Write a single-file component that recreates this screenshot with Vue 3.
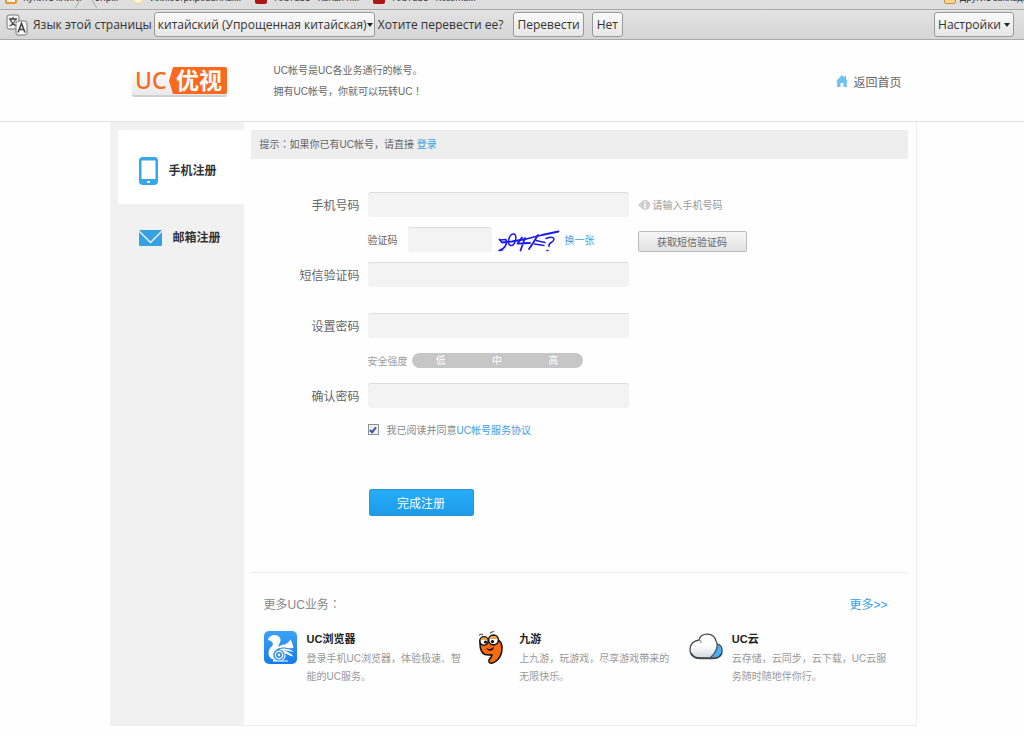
<script setup>
import { ref } from 'vue'

const bookmarks = [
  { text: 'Купите книги', kind: 'shop' },
  { text: 'эпр...', kind: 'none' },
  { text: 'Иллюстрированны...', kind: 'sun' },
  { text: 'YouTube - Канал п...', kind: 'tube' },
  { text: 'YouTube - Rossma...', kind: 'tube' },
]
const services = [
  { id: 'browser', title: 'UC浏览器', text: '登录手机UC浏览器，体验极速、智能的UC服务。' },
  { id: 'game', title: '九游', text: '上九游，玩游戏，尽享游戏带来的无限快乐。' },
  { id: 'cloud', title: 'UC云', text: '云存储，云同步，云下载，UC云服务随时随地伴你行。' },
]
const phone = ref('')
const captcha = ref('')
const sms = ref('')
const password = ref('')
const confirm = ref('')
const agreed = ref(true)
</script>

<template>
  <div class="page">
    <div class="bookmarks">
      <span v-for="b in bookmarks" :key="b.text" class="bookmark" :class="b.kind">
        <i v-if="b.kind !== 'none'" class="favicon"></i><span>{{ b.text }}</span>
      </span>
      <svg class="tab-edge" viewBox="0 0 26 9" aria-hidden="true">
        <path d="M0 8.500 L5 0 M17 0 L22 8.500" fill="none" stroke="#aaa" />
      </svg>
      <span class="bookmark folder"><i class="favicon"></i><span>Другие закладки</span></span>
    </div>

    <div class="translate">
      <svg class="tr-icon" viewBox="0 0 22 22" aria-hidden="true">
        <rect x="1" y="1" width="12" height="14" rx="2" fill="#f5f5f5" stroke="#777" />
        <path d="M3 5h8M7 3v2M9.500 5C9 8 6 11 3.500 12M4.500 5.500C5.500 9 8 11 10.500 12" fill="none" stroke="#444" stroke-width="1.300" />
        <rect x="10" y="7" width="11" height="14" rx="2" fill="#fafafa" stroke="#777" />
        <path d="M12 18.500 15.500 9.500 19 18.500M13.300 15.500h4.400" fill="none" stroke="#444" stroke-width="1.600" />
      </svg>
      <label for="lang">Язык этой страницы</label>
      <span class="select-wrap">
        <select id="lang"><option>китайский (Упрощенная китайская)</option></select>
        <i class="caret"></i>
      </span>
      <span class="ask">Хотите перевести ее?</span>
      <button type="button">Перевести</button>
      <button type="button" class="no">Нет</button>
      <button type="button" class="settings">Настройки<i class="caret"></i></button>
    </div>

    <header class="header">
      <div class="wrap header-in">
        <svg class="logo" viewBox="0 0 100 34" role="img" aria-label="UC优视">
          <defs>
            <linearGradient id="lg" x1="0" y1="0" x2="0" y2="1">
              <stop offset="0" stop-color="#fff" /><stop offset="1" stop-color="#e9e9e9" />
            </linearGradient>
          </defs>
          <rect x="2" y="5" width="95" height="28" rx="2" fill="#d0d0d0" />
          <rect x="2" y="3" width="95" height="28" rx="2" fill="url(#lg)" />
          <path d="M43 3H95a2 2 0 0 1 2 2V28a2 2 0 0 1-2 2H43L39 17Z" fill="#fb6a1c" />
          <text x="5" y="25" class="logo-uc">UC</text>
          <text x="46" y="25" class="logo-cn">优视</text>
        </svg>
        <p class="intro">UC帐号是UC各业务通行的帐号。<br />拥有UC帐号，你就可以玩转UC<span class="mid">！</span></p>
        <a href="#" class="home">
          <svg viewBox="0 0 12 12" aria-hidden="true"><path d="M6 0 8.500 2.500V1H10V4L12 6.200H10.800V12H7.500V8H4.500V12H1.200V6.200H0Z" fill="#6fc1f2" /></svg>
          返回首页
        </a>
      </div>
    </header>

    <div class="wrap main">
      <nav class="side">
        <a href="#" class="tab active">
          <svg class="ic-phone" viewBox="0 0 19 28" aria-hidden="true">
            <rect width="19" height="28" rx="4" fill="#35a6e8" />
            <rect x="2.500" y="3.500" width="14" height="18.500" fill="#fff" />
            <rect x="8" y="24" width="3" height="2" rx="1" fill="#fff" />
          </svg>
          <span>手机注册</span>
        </a>
        <a href="#" class="tab">
          <svg class="ic-mail" viewBox="0 0 23 16" aria-hidden="true">
            <rect width="23" height="16" rx="1" fill="#35a3e2" />
            <path d="M0 1 11.500 12.500 23 1" fill="none" stroke="#f1f1f1" stroke-width="1.400" />
          </svg>
          <span>邮箱注册</span>
        </a>
      </nav>

      <main class="content">
        <p class="tip">提示<span class="mid">：</span>如果你已有UC帐号，请直接 <a href="#">登录</a></p>

        <form class="form" @submit.prevent>
          <div class="row">
            <label class="name" for="phone">手机号码</label>
            <input id="phone" v-model="phone" class="box" type="tel" />
            <span class="hint">
              <svg viewBox="0 0 12 12" aria-hidden="true"><path d="M0 6 3 3.200A5 5 0 1 1 3 8.800Z" fill="#cfcfcf" /><path d="M7 2.500v1.500M7 5v4.500" stroke="#fff" stroke-width="1.600" /></svg>
              请输入手机号码
            </span>
          </div>
          <div class="row sub">
            <label class="small" for="captcha">验证码</label>
            <input id="captcha" v-model="captcha" class="box short" type="text" />
            <svg class="captcha" viewBox="0 0 62 22" role="img" aria-label="验证码图片">
              <g fill="none" stroke="#1a1af0" stroke-width="1.500" stroke-linecap="round" stroke-linejoin="round">
                <path d="M60.500 1.500 44 5 28 9 14 11.500 4 12.500 1.500 9.500" stroke-width="1.800" />
                <path d="M2 10 8 9.500C10 13 7 19 1 20.500L4.500 20" />
                <path d="M16 4C11 3.500 8.500 14 12.500 15.500C17 16.500 20 5 16 4Z" />
                <path d="M24 7.500 19.500 13.500 32 13M27 8 22.500 20.500M40 5C37 10 34 15 31 19" stroke-width="1.800" />
                <path d="M38 10.500 47 12.500M36.500 14 46 15.500M48 8.500C56 5.500 58 9 54 12C50 14 51 16 51 16.500M49 20.500h1" />
              </g>
            </svg>
            <a href="#" class="swap">换一张</a>
            <button type="button" class="sms-btn">获取短信验证码</button>
          </div>
          <div class="row">
            <label class="name" for="sms">短信验证码</label>
            <input id="sms" v-model="sms" class="box" type="text" />
          </div>
          <div class="row apart">
            <label class="name" for="pw">设置密码</label>
            <input id="pw" v-model="password" class="box" type="password" />
          </div>
          <div class="row sub strength">
            <span>安全强度</span>
            <span class="meter"><b>低</b><b>中</b><b>高</b></span>
          </div>
          <div class="row">
            <label class="name" for="pw2">确认密码</label>
            <input id="pw2" v-model="confirm" class="box" type="password" />
          </div>
          <div class="row sub agree">
            <input id="agree" v-model="agreed" type="checkbox" />
            <label for="agree">我已阅读并同意<a href="#">UC帐号服务协议</a></label>
          </div>
          <button type="submit" class="submit">完成注册</button>
        </form>

        <section class="more">
          <div class="more-head"><span>更多UC业务<span class="mid">：</span></span><a href="#">更多&gt;&gt;</a></div>
          <div class="services">
            <article v-for="s in services" :key="s.id" class="service">
              <svg v-if="s.id === 'browser'" viewBox="0 0 34 34" aria-hidden="true">
                <defs><linearGradient id="bg" x1="0" y1="0" x2="0" y2="1"><stop offset="0" stop-color="#3ba2f8" /><stop offset="1" stop-color="#167de8" /></linearGradient></defs>
                <rect width="33" height="33" rx="5" fill="url(#bg)" />
                <path d="M4 9C5 4 13 2 16 7C18 11 14 13 14.500 16C17 14 19 13.500 21 13.500C23 12 25 11 26.500 8.500C28 11 29 14 29.500 17C26 17.500 23 17 21 16.500C18 16 13 17 11 20C9 23 9 27 12 29C4 29 2 20 8 15C11 12 6 9 4 9Z" fill="#fff" />
                <path d="M16 18C20 16.500 25 18 30 20.500C26 20.500 22 19 19 19.500C23 20 27 22 29.500 25.500C26 25 23 23 20.500 22.500C23 25 21 28.500 18 29.500H24V30.500H9V29.500Z" fill="#fff" />
                <circle cx="15" cy="24" r="5" fill="#fff" stroke="#2288ec" stroke-width="1.200" />
                <circle cx="15" cy="24" r="2.200" fill="#fff" stroke="#2288ec" stroke-width="1.600" />
              </svg>
              <svg v-else-if="s.id === 'game'" viewBox="0 0 34 34" aria-hidden="true">
                <path d="M4 12C4 17 5 22 9 23.500C12 24.500 15 23.500 16 24C15 28 12 28 13 31C15 35 26 29 26 17C26 11 23 7 16 9Z" fill="#fa6b10" stroke="#17130f" stroke-width="1.600" />
                <circle cx="8" cy="10" r="4.200" fill="#fff" stroke="#17130f" stroke-width="1.600" />
                <circle cx="17.500" cy="9" r="4.900" fill="#fff" stroke="#17130f" stroke-width="1.600" />
                <path d="M4.500 9C5 5.500 11 5.500 11.500 9ZM13.500 8C14 4 21 4 21.500 8Z" fill="#f5a431" />
                <circle cx="9.500" cy="11" r="1.500" /><circle cx="16.500" cy="10.500" r="1.600" />
                <path d="M10 17C13 19 16 18 18 15.500C18 21 12 21 10 17Z" fill="#2a0c02" />
                <path d="M3 4.500C4 2.500 6 3 7 4M14 2.500C15 1 17 1 18 0" fill="none" stroke="#666" stroke-width="1.200" />
              </svg>
              <svg v-else viewBox="0 0 34 34" aria-hidden="true">
                <defs><linearGradient id="cg" x1="0" y1="0" x2="0" y2="1"><stop offset="0.500" stop-color="#fff" /><stop offset="1" stop-color="#d2d6da" /></linearGradient></defs>
                <path d="M28 13C34 13 36 25 27 27H20Z" fill="#49aef8" stroke="#43474c" stroke-width="1.200" />
                <path d="M7 27C-1 25-2 11 10 9C12 1 25 1 27 10C30 15 27 22 21 27Z" fill="url(#cg)" stroke="#4a4d50" stroke-width="1.300" />
                <path d="M10 9C11.500 9 12 10 12 12" fill="none" stroke="#777" />
                <path d="M2 22C5 28 11 27.500 20 27.500C28 27.500 31 26.500 33 22" fill="none" stroke="#43474c" stroke-width="1.600" />
              </svg>
              <div class="desc">
                <h3>{{ s.title }}</h3>
                <p>{{ s.text }}</p>
              </div>
            </article>
          </div>
        </section>
      </main>
    </div>
  </div>
</template>

<style>
body { margin: 0; background: #fefefe; }
</style>

<style scoped>
* { box-sizing: border-box; }
.page { font-family: "Liberation Sans", "Noto Sans CJK SC", sans-serif; font-size: 10px; color: #666; }
p, h3 { margin: 0; }
a { color: #3a9fe3; text-decoration: none; }
svg { display: block; flex: none; }
button, input, select { font-family: inherit; font-size: inherit; color: inherit; margin: 0; }
.mid { font-family: "Noto Sans CJK JP", sans-serif; line-height: 1; }

.bookmarks { position: relative; display: flex; align-items: flex-end; height: 10px; padding-bottom: 5px; overflow: hidden; background: #dedede; border-bottom: 1px solid #aaa; font: 9px/12px "Open Sans", sans-serif; color: #222; white-space: nowrap; }
.bookmark { display: flex; align-items: flex-end; gap: 6px; flex: none; margin-left: 14px; }
.bookmark:first-child { margin-left: 5px; }
.favicon { width: 12px; height: 12px; border-radius: 2px; background: #b01414; }
.shop .favicon { background: #fff3df; border: 2px solid #e9963b; }
.sun .favicon { border-radius: 6px; background: #fff6d8; border: 1px solid #ecd08a; }
.folder .favicon { background: #fbd58c; border: 1px solid #c98f3e; }
.folder.bookmark { position: absolute; left: calc(100% - 80px); bottom: 5px; margin: 0; gap: 4px; }
.tab-edge { position: absolute; left: 75px; top: 0; width: 26px; height: 9px; }

.translate { display: flex; align-items: center; height: 30px; padding: 0 10px 0 6px; background: linear-gradient(#e3e3e3, #d5d5d5); border-bottom: 1px solid #aaa; font: 12px/16px "Open Sans", sans-serif; color: #333; white-space: nowrap; }
.tr-icon { width: 22px; height: 22px; margin-right: 5px; }
.select-wrap { position: relative; width: 221px; margin: 0 3px 0 2px; }
.translate select, .translate button { height: 25px; padding: 0 3px; border: 1px solid #999; border-radius: 3px; background: linear-gradient(#fafafa, #e6e6e6); }
.translate select { display: block; width: 100%; appearance: none; }
.caret { display: inline-block; border: 3px solid transparent; border-top: 4px solid #222; border-bottom: 0; }
.select-wrap .caret { position: absolute; right: 2px; top: 11px; }
.ask { margin-right: 10px; }
.translate .no { margin-left: 8px; padding: 0 4px; }
.translate .settings { display: flex; align-items: center; gap: 3px; margin-left: auto; }

.header { border-bottom: 1px solid #e2e2e2; }
.wrap { width: 79%; min-width: 807px; max-width: 807px; margin: 0 auto; position: relative; left: 1px; }
.header-in { display: flex; align-items: center; height: 82px; padding: 0 15px 0 20px; margin-bottom: -1px; }
.logo { width: 100px; height: 34px; }
.logo-uc { font: 500 23px "Noto Sans", sans-serif; fill: #fb6a1c; }
.logo-cn { font: 700 23px "Noto Sans CJK SC", sans-serif; fill: #fff; }
.intro { margin-left: 44px; line-height: 21px; }
.home { display: flex; align-items: center; gap: 5px; margin-left: auto; font-size: 12px; color: #666; }
.home svg { width: 12px; height: 12px; }

.main { display: flex; min-height: 604px; border-right: 1px solid #eee; border-bottom: 1px solid #eee; }
.side { width: 134px; flex: none; padding: 8px 0 0 8px; background: #f1f1f1; }
.tab { display: flex; align-items: center; gap: 11px; height: 68px; padding-left: 21px; font-size: 12px; font-weight: 700; color: #333; }
.tab span { padding-bottom: 4px; }
.tab.active { height: 74px; background: #fff; border-radius: 3px 0 0 3px; padding-top: 8px; }
.ic-phone { width: 19px; height: 28px; }
.ic-mail { width: 23px; height: 16px; }

.content { flex: 1; padding: 8px 8px 0 7px; }
.tip { padding: 0 9px; line-height: 29px; height: 29px; background: #eee; }
.form { padding: 33px 0 56px; }
.row { display: flex; align-items: center; height: 25px; margin-bottom: 10px; }
.row.sub { padding-left: 117px; }
.row.apart { margin-top: 26px; }
.name { width: 109px; margin-right: 8px; text-align: right; font-size: 12px; }
.box { width: 261px; height: 25px; padding: 0 6px; border: 0; border-top: 1px solid #ddd; border-radius: 3px; background: #f3f3f3; }
.box.short { width: 84px; margin-left: 10px; }
.hint { display: flex; align-items: center; gap: 3px; margin-left: 9px; color: #999; }
.hint svg { width: 12px; height: 12px; }
.captcha { width: 62px; height: 22px; margin-left: 6px; align-self: flex-end; }
.swap { margin-left: 5px; }
.sms-btn { width: 109px; height: 21px; margin-left: 43px; margin-top: 3px; padding: 0; border: 1px solid #bbb; border-radius: 2px; background: linear-gradient(#f6f6f6, #e2e2e2); }
.strength { color: #999; }
.meter { display: flex; justify-content: space-around; width: 171px; height: 15px; margin-left: 4px; padding: 0 1px; border-radius: 8px; background: #c6c6c6; color: #fff; line-height: 16px; }
.meter b { font-weight: 400; }
.agree { height: 23px; color: #888; }
.agree input { appearance: none; width: 11px; height: 11px; margin-right: 8px; border: 1px solid #8e8f8f; background: #eef0f4; display: grid; place-items: center; }
.agree input:checked::before { content: ""; box-sizing: border-box; width: 4px; height: 7px; border: solid #36549c; border-width: 0 2px 2px 0; transform: rotate(40deg); }
.submit { display: block; width: 105px; height: 27px; margin: 48px 0 0 118px; padding: 0; border: 1px solid #3295d2; border-radius: 2px; background: linear-gradient(#26adf9, #1d9be8); color: #fff; font-size: 12px; }

.more { border-top: 1px solid #eee; padding: 23px 0 0 13px; }
.more-head { display: flex; justify-content: space-between; padding-right: 20px; font-size: 12px; line-height: 18px; height: 18px; color: #888; }
.services { display: grid; grid-template-columns: repeat(3, 1fr); padding-top: 17px; margin-right: 6px; }
.service { display: flex; gap: 9px; }
.service svg { width: 34px; height: 34px; }
.desc { width: 156px; line-height: 18px; color: #999; }
.desc h3 { margin-bottom: 3px; font-size: 11px; line-height: 16px; color: #222; }
</style>
